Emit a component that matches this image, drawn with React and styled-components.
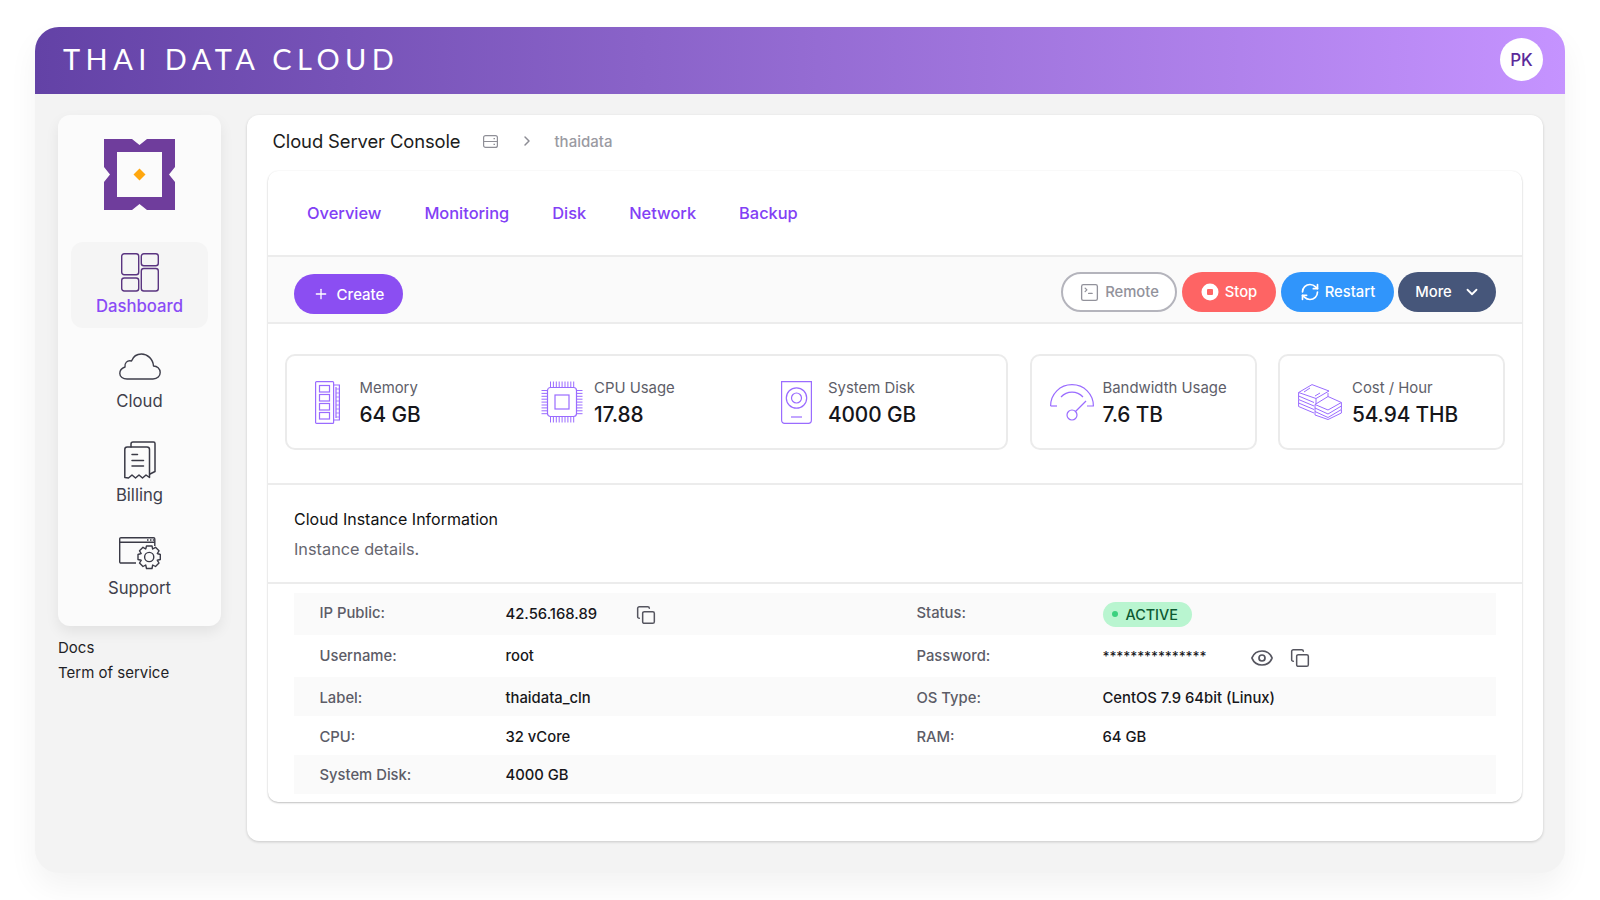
import React from "react";
import styled, { createGlobalStyle } from "styled-components";
import { Plus, SquareTerminal, RefreshCw, ChevronDown, ChevronRight, Copy, Eye } from "lucide-react";

const Global = createGlobalStyle`
  html, body { margin: 0; padding: 0; background: #fff; }
  body { font-family: Inter, "Liberation Sans", sans-serif; -webkit-font-smoothing: antialiased; }
`;

const Page = styled.div`
  width: 1600px; height: 900px; padding: 27px 35px; box-sizing: border-box; overflow: hidden;
`;
const Shell = styled.div`
  width: 1530px; height: 846px; background: #f3f3f3; border-radius: 24px;
  box-shadow: 0 14px 30px rgba(0,0,0,.05); display: flex; flex-direction: column;
`;
const Header = styled.header`
  height: 67px; flex: none; border-radius: 24px 24px 0 0; box-sizing: border-box;
  background: linear-gradient(90deg, #6342a6 0%, #8a63c9 40%, #c593ff 100%);
  display: flex; align-items: center; justify-content: space-between; padding: 0 22px 2px 28px;
`;
const Brand = styled.div`
  color: #fff; font-family: Lato, sans-serif; font-weight: 400; font-size: 29px; letter-spacing: 5.45px; white-space: nowrap;
  line-height: 36px; padding-bottom: 1px;
`;
const Avatar = styled.div`
  width: 43px; height: 43px; border-radius: 50%; background: #fff; color: #5b2a9a;
  display: flex; align-items: center; justify-content: center; font-size: 17px; font-weight: 500;
`;
const Body = styled.div`
  flex: 1; display: flex; gap: 26px; padding: 21px 22px 32px 23px; min-height: 0;
`;
const Side = styled.aside`
  width: 163px; flex: none; display: flex; flex-direction: column;
`;
const NavCard = styled.nav`
  height: 511px; box-sizing: border-box; background: #fbfbfb; border-radius: 12px; padding: 24px 13px 0;
  box-shadow: 0 6px 14px rgba(0,0,0,.07); display: flex; flex-direction: column; align-items: stretch;
`;
const LogoWrap = styled.div`
  height: 103px; display: flex; justify-content: center; align-items: flex-start; flex: none;
`;
const NavItem = styled.a`
  height: ${p => p.$h}px; flex: none; border-radius: 12px; background: ${p => p.$active ? "#f5f5f5" : "transparent"};
  color: ${p => p.$active ? "#8a4cf6" : "#3f3f4c"}; font-size: 16.7px; font-weight: ${p => p.$active ? 500 : 400};
  display: flex; flex-direction: column; align-items: center; padding-top: ${p => p.$top}px; box-sizing: border-box; line-height: 20px;
  svg { display: block; flex: none; margin-bottom: ${p => p.$gap}px; }
`;
const Foot = styled.div`
  margin-top: 12px; display: flex; flex-direction: column; gap: 5px; font-size: 15px; line-height: 20px; color: #1f1f26; font-weight: 400;
`;
const Main = styled.main`
  flex: 1; min-width: 0; background: #fff; border-radius: 12px; box-shadow: 0 1px 3px rgba(0,0,0,.18);
  display: flex; flex-direction: column; padding: 0 21px;
`;
const Crumbs = styled.div`
  height: 56px; flex: none; display: flex; align-items: center; padding: 0 0 4px 4.5px; box-sizing: border-box; color: #1c1c20;
`;
const Title = styled.h1`
  margin: 0; font-size: 18.4px; font-weight: 400; white-space: nowrap; letter-spacing: -.1px;
`;
const CrumbIcon = styled.svg`
  margin-left: 22px; flex: none;
`;
const CrumbArrow = styled.span`
  display: flex; margin-left: 21px; color: #8c8c94;
`;
const CrumbText = styled.span`
  margin-left: 20px; font-size: 15px; font-weight: 500; color: #9a9aa2;
`;
const Card = styled.section`
  height: 631px; flex: none; border-radius: 10px; background: #fff; box-shadow: 0 1px 2px rgba(0,0,0,.24), 0 0 2px rgba(0,0,0,.05);
  display: flex; flex-direction: column;
`;
const Tabs = styled.div`
  height: 86px; flex: none; box-sizing: border-box; border-bottom: 2px solid #ececec; display: flex; align-items: center;
  padding: 0 0 0 39px; gap: 43px;
`;
const Tab = styled.a`
  font-size: 16.4px; font-weight: 500; color: #8240f5; white-space: nowrap;
`;
const Toolbar = styled.div`
  height: 67px; flex: none; box-sizing: border-box; background: #fafafa; border-bottom: 2px solid #ececec;
  display: flex; justify-content: space-between; align-items: flex-start; padding: 15px 26px 0;
`;
const Create = styled.button`
  margin-top: 2px; width: 109px; height: 40px; border: 0; border-radius: 20px; background: #8b4ef2; color: #fff;
  font: 500 15px Inter, sans-serif; display: flex; align-items: center; justify-content: center; gap: 8px; padding: 0;
`;
const Actions = styled.div`
  display: flex; gap: 5px;
`;
const Action = styled.button`
  width: ${p => p.$w}px; height: 40px; box-sizing: border-box; border-radius: 20px; margin-left: ${p => p.$ml || 0}px;
  border: ${p => p.$outline ? "2px solid #b4b4bc" : "0"}; background: ${p => p.$bg}; color: ${p => p.$fg};
  font: 500 14.8px Inter, sans-serif; display: flex; align-items: center; justify-content: center; gap: ${p => p.$gap || 6}px;
  padding: 0 0 0 ${p => p.$pl || 0}px;
`;
const Stats = styled.div`
  height: 161px; flex: none; box-sizing: border-box; padding: 30px 18px 0 17px; display: flex; gap: 21.5px; border-bottom: 2px solid #ececec;
`;
const StatCard = styled.div`
  width: ${p => p.$w}px; height: 96px; box-sizing: border-box; flex: none; border: 2px solid #ebebeb; border-radius: 10px;
  display: ${p => p.$grid ? "grid" : "flex"}; grid-template-columns: 226px 240px 1fr; align-items: center;
  padding-left: ${p => p.$pad}px;
`;
const Stat = styled.div`
  display: flex; align-items: center;
`;
const IconSlot = styled.div`
  width: ${p => p.$w}px; flex: none; display: flex;
`;
const StatText = styled.div`
  padding-top: 3px;
`;
const StatLabel = styled.div`
  font-size: 14.9px; line-height: 20px; color: #5e5e69; white-space: nowrap;
`;
const StatValue = styled.div`
  font-size: 20.8px; line-height: 30px; margin-top: 2px; font-weight: 500; color: #16161a; white-space: nowrap; letter-spacing: -.1px;
`;
const InfoHead = styled.div`
  height: 99px; flex: none; box-sizing: border-box; padding: 22px 26px 0; border-bottom: 2px solid #ececec;
`;
const InfoTitle = styled.h2`
  margin: 0; font-size: 16px; line-height: 24px; font-weight: 400; color: #111;
`;
const InfoSub = styled.p`
  margin: 6px 0 0; font-size: 16.3px; line-height: 24px; color: #66666f;
`;
const Table = styled.div`
  padding: 9px 26px 0; display: flex; flex-direction: column;
`;
const Row = styled.div`
  height: ${p => p.$h}px; flex: none; box-sizing: border-box; background: ${p => p.$alt ? "#fafafa" : "#fff"}; padding: ${p => p.$top || 0}px 0 ${p => p.$bottom || 0}px 25.5px;
  display: grid; grid-template-columns: 186px 411px 186px 1fr; align-items: center;
  font-size: 14.8px;
`;
const Key = styled.div`
  color: #5c5c67; font-weight: 500; padding-bottom: ${p => p.$up ? 3 : 0}px;
`;
const Val = styled.div`
  color: #17171b; font-weight: 500; display: flex; align-items: center;
`;
const Dots = styled.span`
  width: 170px; letter-spacing: -.1px; font-size: 13.5px; white-space: nowrap;
`;
const IconBtn = styled.span`
  display: flex; color: #55555f; margin-left: ${p => p.$ml}px; margin-top: ${p => p.$mt || 2}px;
`;
const Badge = styled.span`
  width: 89px; height: 25px; border-radius: 13px; background: #b9f5d0; color: #0d5a32; font-size: 14.4px; font-weight: 500;
  display: flex; align-items: center; box-sizing: border-box; padding-left: 9px; gap: 8px;
  &::before { content: ""; width: 6px; height: 6px; border-radius: 50%; background: #3bd17f; }
`;

const I = "#9a6cff";

const Logo = () => (
  <svg width="71" height="71" viewBox="0 0 71 71">
    <path d="M0 0H28L35.5 6 43 0H71V28L65 35.5 71 43V71H43L35.5 65 28 71H0V43L6 35.5 0 28Z" fill="#6f3d9c" />
    <rect x="13" y="13" width="45" height="45" fill="#fbfbfb" />
    <path d="M35.5 29.5L41.5 35.5 35.5 41.5 29.5 35.5Z" fill="#ffa70f" />
  </svg>
);
const DashIcon = () => (
  <svg width="38" height="39" viewBox="0 0 38 39" fill="none" stroke="#5a3480" strokeWidth="1.4">
    <rect x=".7" y=".7" width="17" height="21" rx="2.5" />
    <rect x="20.3" y=".7" width="17" height="12" rx="2.5" />
    <rect x=".7" y="25" width="17" height="13" rx="2.5" />
    <rect x="20.3" y="15.5" width="17" height="22.5" rx="2.5" />
  </svg>
);
const CloudIcon = () => (
  <svg width="42" height="27" viewBox="0 0 42 27" fill="none" stroke="#3f3f4c" strokeWidth="1.4" strokeLinejoin="round">
    <path d="M8 26H34C38.5 26 41.2 23 41.2 19.5 41.2 15.5 38 13 34.5 13 34 6 28.5 1 22.5 1 17.5 1 14 4 12.5 8 8 7 5.5 10 6 14 3 15 .8 17.5 .8 20.5 .8 23.8 4 26 8 26Z" />
  </svg>
);
const BillIcon = () => (
  <svg width="32" height="38" viewBox="0 0 32 38" fill="none" stroke="#3a3a46" strokeWidth="1.5" strokeLinejoin="round" strokeLinecap="round">
    <path d="M7 6V3C7 1.8 7.8 1 9 1H29.5C30.4 1 31 1.6 31 2.5V30.5L26 33" />
    <path d="M.8 36.5V8.5C.8 7 1.8 6 3.2 6H23C24.6 6 25.5 7 25.5 8.5V36.5L22 34 18.5 37 15 34 11.5 37 8 34 4.5 37Z" />
    <path d="M8 13.5H13.5M8 19.5H19.5M8 25H19.5" />
  </svg>
);
const SupportIcon = () => (
  <svg width="42" height="33" viewBox="0 0 42 33" fill="none" stroke="#3a3a46" strokeWidth="1.4" strokeLinejoin="round">
    <path d="M17 26H2C1.2 26 .7 25.5 .7 24.7V2C.7 1.2 1.2 .7 2 .7H34.5C35.3 .7 35.8 1.2 35.8 2V9" />
    <path d="M.7 5.2H35.8M28 3H29.5M31 3H32.5M33.8 3H35" />
    <path d="M27.5 9H33L33.7 12 36.5 10.3 40 13.8 38.3 16.5 41.3 17.5V22.5L38.3 23.3 40 26 36.5 29.5 33.7 28 33 31.5H27.5L26.7 28 24 29.5 20.5 26 22.2 23.3 19 22.5V17.5L22.2 16.5 20.5 13.8 24 10.3 26.7 12Z" />
    <circle cx="30.2" cy="20" r="4.6" />
  </svg>
);
const MemIcon = () => (
  <svg width="25" height="43" viewBox="0 0 25 43" fill="none" stroke={I} strokeWidth="1.2">
    <rect x=".6" y=".6" width="18" height="41.8" rx="1" />
    <path d="M18.6 4H24.4V39H18.6M21 6V37" />
    <path d="M21 8H24.4M21 12H24.4M21 16H24.4M21 20H24.4M21 24H24.4M21 28H24.4M21 32H24.4M21 36H24.4" strokeWidth=".8" />
    <rect x="4.5" y="4.5" width="10" height="6.5" />
    <rect x="4.5" y="13.5" width="10" height="6.5" />
    <rect x="4.5" y="22.5" width="10" height="6.5" />
    <rect x="4.5" y="31.5" width="10" height="6.5" />
  </svg>
);
const pins = [0, 1, 2, 3, 4, 5, 6, 7, 8];
const CpuIcon = () => (
  <svg width="42" height="42" viewBox="0 0 42 42" fill="none" stroke={I} strokeWidth="1.2">
    <rect x="6.5" y="6.5" width="29" height="29" rx="3" />
    <rect x="14" y="14" width="14" height="14" />
    {pins.map(i => <path key={i} strokeWidth="1" d={`M${9.5 + i * 2.9} .5V6.5M${9.5 + i * 2.9} 35.5V41.5M.5 ${9.5 + i * 2.9}H6.5M35.5 ${9.5 + i * 2.9}H41.5`} />)}
  </svg>
);
const DiskIcon = () => (
  <svg width="31" height="43" viewBox="0 0 31 43" fill="none" stroke={I} strokeWidth="1.2">
    <path d="M.6 .6H30.4V39C30.4 41 29.4 42.4 27.4 42.4H3.6C1.6 42.4 .6 41 .6 39Z" />
    <circle cx="15.5" cy="17" r="10.2" />
    <circle cx="15.5" cy="17" r="5" />
    <path d="M10 36H21" />
  </svg>
);
const GaugeIcon = () => (
  <svg width="44" height="37" viewBox="0 0 44 37" fill="none" stroke={I} strokeWidth="1.2" strokeLinejoin="round">
    <path d="M.6 22C.6 10 10 .7 22 .7S43.4 10 43.4 22H37" />
    <path d="M.6 22H7" />
    <path d="M11 13C17 6.5 27 6.5 33 13" />
    <circle cx="22" cy="31" r="5" />
    <path d="M25.5 27.5L36 17" />
  </svg>
);
const CashIcon = () => (
  <svg width="44" height="36" viewBox="0 0 44 36" fill="none" stroke={I} strokeWidth="1" strokeLinejoin="round">
    <path d="M.6 8.5L14 .6 31 7 18 14.5Z" />
    <path d="M.6 8.5V12L16 18.5M.6 12V15.5L16 22M.6 15.5V19L16 25.5M.6 19V22.5L16 29" />
    <path d="M18 14.5V20M12 4L6 8M22 9L17 12" />
    <path d="M17 20.5L30 12.5 43.4 18.5 30 26Z" />
    <path d="M17 20.5V24L30 30 43.4 22V18.5M17 24V27.5L30 33.5 43.4 25.5V22M17 27.5V31L30 35.5 43.4 29V25.5" />
    <path d="M30 12.5V9" />
  </svg>
);
const ServerIcon = () => (
  <CrumbIcon width="15" height="13" viewBox="0 0 15 13" fill="none" stroke="#8f8f97" strokeWidth="1.2">
    <rect x=".6" y=".6" width="13.8" height="11.8" rx="2" />
    <path d="M.6 6.5H14.4M10.5 3.6H12M10.5 9.4H12" />
  </CrumbIcon>
);
const StopIcon = () => (
  <svg width="18" height="18" viewBox="0 0 18 18"><circle cx="9" cy="9" r="8.5" fill="#fff" /><rect x="6" y="6" width="6" height="6" rx="1" fill="#fe6464" /></svg>
);

export default function App() {
  return (
    <Page>
      <Global />
      <Shell>
        <Header>
          <Brand>THAI DATA CLOUD</Brand>
          <Avatar>PK</Avatar>
        </Header>
        <Body>
          <Side>
            <NavCard>
              <LogoWrap><Logo /></LogoWrap>
              <NavItem $active $h={86} $top={11} $gap={4}><DashIcon />Dashboard</NavItem>
              <NavItem $h={94} $top={25} $gap={11}><CloudIcon />Cloud</NavItem>
              <NavItem $h={93} $top={19} $gap={6}><BillIcon />Billing</NavItem>
              <NavItem $h={94} $top={22} $gap={8}><SupportIcon />Support</NavItem>
            </NavCard>
            <Foot>
              <span>Docs</span>
              <span>Term of service</span>
            </Foot>
          </Side>
          <Main>
            <Crumbs>
              <Title>Cloud Server Console</Title>
              <ServerIcon />
              <CrumbArrow><ChevronRight size={16} strokeWidth={2.2} /></CrumbArrow>
              <CrumbText>thaidata</CrumbText>
            </Crumbs>
            <Card>
              <Tabs>
                <Tab>Overview</Tab>
                <Tab>Monitoring</Tab>
                <Tab>Disk</Tab>
                <Tab>Network</Tab>
                <Tab>Backup</Tab>
              </Tabs>
              <Toolbar>
                <Create><Plus size={16} strokeWidth={2} />Create</Create>
                <Actions>
                  <Action $w={116} $gap={5} $outline $bg="#fff" $fg="#92929b"><SquareTerminal size={21} strokeWidth={1.5} />Remote</Action>
                  <Action $w={94} $bg="#fe6464" $fg="#fff"><StopIcon />Stop</Action>
                  <Action $w={113} $gap={5} $bg="#3095fb" $fg="#fff"><RefreshCw size={20} strokeWidth={2} />Restart</Action>
                  <Action $w={98} $ml={-1} $gap={11} $pl={2} $bg="#46567a" $fg="#fff">More<ChevronDown size={18} strokeWidth={2.4} /></Action>
                </Actions>
              </Toolbar>
              <Stats>
                <StatCard $w={723} $pad={28} $grid>
                  <Stat><IconSlot $w={44.5}><MemIcon /></IconSlot><StatText><StatLabel>Memory</StatLabel><StatValue>64 GB</StatValue></StatText></Stat>
                  <Stat><IconSlot $w={53}><CpuIcon /></IconSlot><StatText><StatLabel>CPU Usage</StatLabel><StatValue>17.88</StatValue></StatText></Stat>
                  <Stat><IconSlot $w={47}><DiskIcon /></IconSlot><StatText><StatLabel>System Disk</StatLabel><StatValue>4000 GB</StatValue></StatText></Stat>
                </StatCard>
                <StatCard $w={227} $pad={18}>
                  <Stat><IconSlot $w={53}><GaugeIcon /></IconSlot><StatText><StatLabel>Bandwidth Usage</StatLabel><StatValue>7.6 TB</StatValue></StatText></Stat>
                </StatCard>
                <StatCard $w={227} $pad={18}>
                  <Stat><IconSlot $w={54}><CashIcon /></IconSlot><StatText><StatLabel>Cost / Hour</StatLabel><StatValue>54.94 THB</StatValue></StatText></Stat>
                </StatCard>
              </Stats>
              <InfoHead>
                <InfoTitle>Cloud Instance Information</InfoTitle>
                <InfoSub>Instance details.</InfoSub>
              </InfoHead>
              <Table>
                <Row $h={42} $alt>
                  <Key $up>IP Public:</Key>
                  <Val>42.56.168.89<IconBtn $ml={39} $mt={1}><Copy size={20} strokeWidth={1.8} /></IconBtn></Val>
                  <Key $up>Status:</Key>
                  <Val><Badge>ACTIVE</Badge></Val>
                </Row>
                <Row $h={42} $bottom={1}>
                  <Key>Username:</Key>
                  <Val>root</Val>
                  <Key>Password:</Key>
                  <Val><Dots>***************</Dots><IconBtn $ml={-23} $mt={4}><Eye size={24} strokeWidth={1.7} /></IconBtn><IconBtn $ml={16} $mt={4}><Copy size={20} strokeWidth={1.8} /></IconBtn></Val>
                </Row>
                <Row $h={39} $alt $top={2}>
                  <Key>Label:</Key>
                  <Val>thaidata_cln</Val>
                  <Key>OS Type:</Key>
                  <Val>CentOS 7.9 64bit (Linux)</Val>
                </Row>
                <Row $h={39} $top={2}>
                  <Key>CPU:</Key>
                  <Val>32 vCore</Val>
                  <Key>RAM:</Key>
                  <Val>64 GB</Val>
                </Row>
                <Row $h={39} $alt>
                  <Key>System Disk:</Key>
                  <Val>4000 GB</Val>
                </Row>
              </Table>
            </Card>
          </Main>
        </Body>
      </Shell>
    </Page>
  );
}
